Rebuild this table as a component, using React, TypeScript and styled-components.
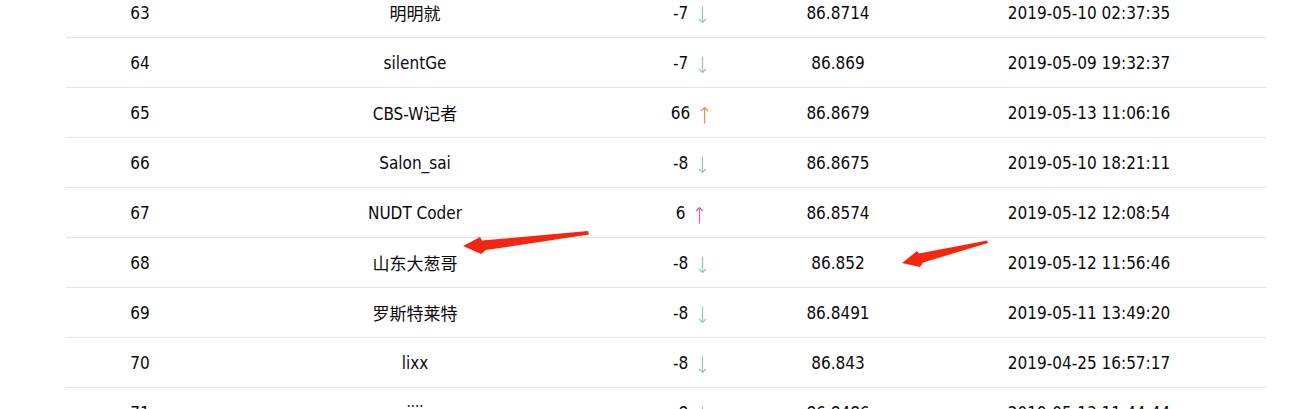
import styled, { createGlobalStyle } from "styled-components";

type Trend = "down" | "up" | "hot";

interface Row {
  rank: number;
  name: string;
  change: number;
  trend: Trend;
  score: string;
  time: string;
}

const rows: Row[] = [
  { rank: 63, name: "明明就", change: -7, trend: "down", score: "86.8714", time: "2019-05-10 02:37:35" },
  { rank: 64, name: "silentGe", change: -7, trend: "down", score: "86.869", time: "2019-05-09 19:32:37" },
  { rank: 65, name: "CBS-W记者", change: 66, trend: "up", score: "86.8679", time: "2019-05-13 11:06:16" },
  { rank: 66, name: "Salon_sai", change: -8, trend: "down", score: "86.8675", time: "2019-05-10 18:21:11" },
  { rank: 67, name: "NUDT Coder", change: 6, trend: "hot", score: "86.8574", time: "2019-05-12 12:08:54" },
  { rank: 68, name: "山东大葱哥", change: -8, trend: "down", score: "86.852", time: "2019-05-12 11:56:46" },
  { rank: 69, name: "罗斯特莱特", change: -8, trend: "down", score: "86.8491", time: "2019-05-11 13:49:20" },
  { rank: 70, name: "lixx", change: -8, trend: "down", score: "86.843", time: "2019-04-25 16:57:17" },
  { rank: 71, name: "jiji", change: -8, trend: "down", score: "86.8486", time: "2019-05-13 11:44:44" }
];

const trendColor: Record<Trend, string> = {
  down: "#93c7b8",
  up: "#f28a4e",
  hot: "#d8609c"
};

const GlobalStyle = createGlobalStyle`
  html, body {
    margin: 0;
    background: #fff;
    overflow: hidden;
  }
  body {
    font-family: "DejaVu Sans Condensed", "DejaVu Sans", "Noto Sans CJK SC", sans-serif;
    font-stretch: condensed;
    font-size: 17px;
    color: #0a0a0a;
  }
`;

const Page = styled.div`
  position: relative;
  width: 1314px;
  height: 409px;
  overflow: hidden;
`;

const Table = styled.div`
  width: 1200px;
  margin: -12px 0 0 66px;
`;

const TableRow = styled.div`
  display: grid;
  grid-template-columns: 148px 402px 148px 148px 354px;
  height: 49px;
  border-bottom: 1px solid #e5e5e5;
  align-items: center;
`;

const Cell = styled.div`
  text-align: center;
  white-space: nowrap;
`;

const ChangeCell = styled.div`
  display: flex;
  justify-content: center;
  align-items: center;
  gap: 10px;
`;

const ArrowIcon = styled.svg`
  display: block;
  margin-top: 4px;
`;

const Overlay = styled.svg`
  position: absolute;
  left: 0;
  top: 0;
  pointer-events: none;
`;

const TrendArrow = ({ trend }: { trend: Trend }) => {
  const color = trendColor[trend];
  const down = trend === "down";
  return (
    <ArrowIcon width="9" height="18" viewBox="0 0 9 18">
      {down ? (
        <path d="M4.5 0.5V16.5M1 13L4.5 16.5L8 13" fill="none" stroke={color} strokeWidth="1.2" />
      ) : (
        <path d="M4.5 17.5V1.5M1 5L4.5 1.5L8 5" fill="none" stroke={color} strokeWidth="1.2" />
      )}
    </ArrowIcon>
  );
};

const App = () => (
  <Page>
    <GlobalStyle />
    <Table>
      {rows.map((r) => (
        <TableRow key={r.rank}>
          <Cell>{r.rank}</Cell>
          <Cell>{r.name}</Cell>
          <ChangeCell>
            <span>{r.change}</span>
            <TrendArrow trend={r.trend} />
          </ChangeCell>
          <Cell>{r.score}</Cell>
          <Cell>{r.time}</Cell>
        </TableRow>
      ))}
    </Table>
    <Overlay width="1314" height="409" viewBox="0 0 1314 409">
      <polygon
        points="463,246 480,237 482,240.5 588,231 589,234.5 486,250 481,254"
        fill="#f5260f"
      />
      <polygon
        points="902,263 917,251 919,253.5 987,240.5 988,243 923,262.5 920,267"
        fill="#f5260f"
      />
    </Overlay>
  </Page>
);

export default App;
